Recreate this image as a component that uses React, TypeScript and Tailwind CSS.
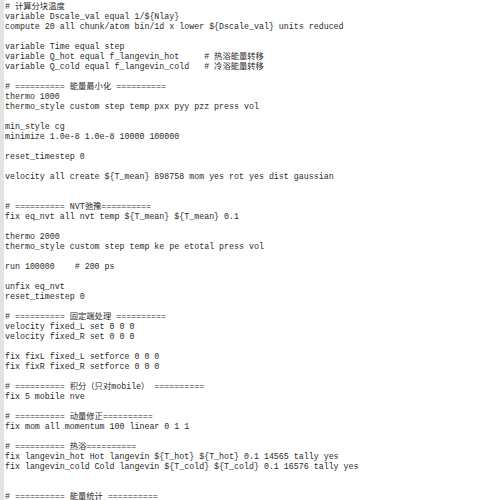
const lines: string[] = [
  "# 计算分块温度",
  "variable Dscale_val equal 1/${Nlay}",
  "compute 20 all chunk/atom bin/1d x lower ${Dscale_val} units reduced",
  "",
  "variable Time equal step",
  "variable Q_hot equal f_langevin_hot     # 热浴能量转移",
  "variable Q_cold equal f_langevin_cold   # 冷浴能量转移",
  "",
  "# ========== 能量最小化 ==========",
  "thermo 1000",
  "thermo_style custom step temp pxx pyy pzz press vol",
  "",
  "min_style cg",
  "minimize 1.0e-8 1.0e-8 10000 100000",
  "",
  "reset_timestep 0",
  "",
  "velocity all create ${T_mean} 898758 mom yes rot yes dist gaussian",
  "",
  "",
  "# ========== NVT弛豫==========",
  "fix eq_nvt all nvt temp ${T_mean} ${T_mean} 0.1",
  "",
  "thermo 2000",
  "thermo_style custom step temp ke pe etotal press vol",
  "",
  "run 100000    # 200 ps",
  "",
  "unfix eq_nvt",
  "reset_timestep 0",
  "",
  "# ========== 固定端处理 ==========",
  "velocity fixed_L set 0 0 0",
  "velocity fixed_R set 0 0 0",
  "",
  "fix fixL fixed_L setforce 0 0 0",
  "fix fixR fixed_R setforce 0 0 0",
  "",
  "# ========== 积分（只对mobile） ==========",
  "fix 5 mobile nve",
  "",
  "# ========== 动量修正==========",
  "fix mom all momentum 100 linear 0 1 1",
  "",
  "# ========== 热浴==========",
  "fix langevin_hot Hot langevin ${T_hot} ${T_hot} 0.1 14565 tally yes",
  "fix langevin_cold Cold langevin ${T_cold} ${T_cold} 0.1 16576 tally yes",
  "",
  "",
  "# ========== 能量统计 ==========",
];

export default function App() {
  return (
    <div className="flex w-[480px] h-[500px] overflow-hidden bg-white">
      {/* gutter */}
      <div className="w-[4px] shrink-0 bg-[#e3e3e3]" />

      {/* code */}
      <pre className="m-0 pl-[1px] pt-[2px] text-[8.3px] leading-[10px] text-[#2a2a2a] whitespace-pre font-['Liberation_Mono','Noto_Sans_CJK_SC',monospace]">
        {lines.map((line, i) => (
          <div key={i} className="h-[10px]">
            {line || " "}
          </div>
        ))}
      </pre>
    </div>
  );
}
